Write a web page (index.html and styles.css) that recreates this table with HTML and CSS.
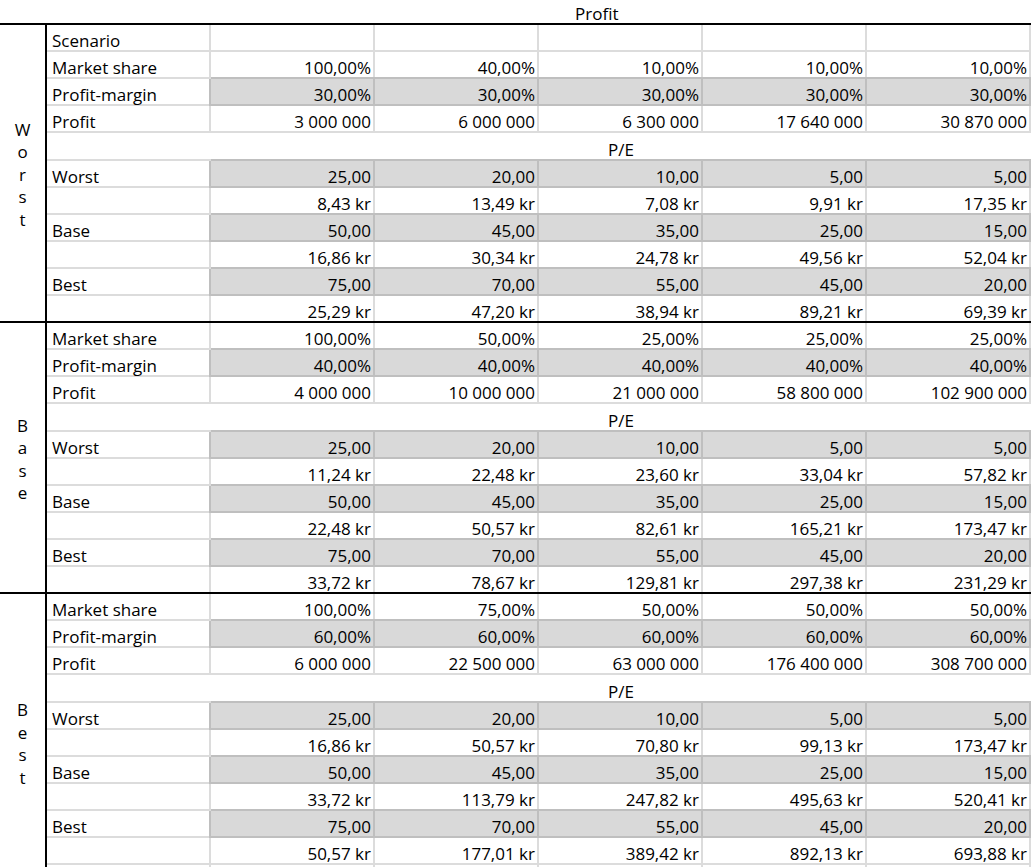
FILE: index.html
```html
<!DOCTYPE html>
<html lang="en">
<head>
<meta charset="utf-8">
<title>Profit scenarios</title>
<link rel="stylesheet" href="styles.css">
</head>
<body>
<div class="sheet">
  <div class="head">Profit</div>

  <div class="section">
    <div class="side">W<br>o<br>r<br>s<br>t</div>
    <div class="rows">
      <div class="row"><div class="cell label">Scenario</div><div class="cell"></div><div class="cell"></div><div class="cell"></div><div class="cell"></div><div class="cell"></div></div>
      <div class="row"><div class="cell label">Market share</div><div class="cell">100,00%</div><div class="cell">40,00%</div><div class="cell">10,00%</div><div class="cell">10,00%</div><div class="cell">10,00%</div></div>
      <div class="row"><div class="cell label">Profit-margin</div><div class="cell g">30,00%</div><div class="cell g">30,00%</div><div class="cell g">30,00%</div><div class="cell g">30,00%</div><div class="cell g">30,00%</div></div>
      <div class="row"><div class="cell label">Profit</div><div class="cell">3 000 000</div><div class="cell">6 000 000</div><div class="cell">6 300 000</div><div class="cell">17 640 000</div><div class="cell">30 870 000</div></div>
      <div class="row pe"><div class="cell label"></div><div class="cell merged">P/E</div></div>
      <div class="row"><div class="cell label">Worst</div><div class="cell g">25,00</div><div class="cell g">20,00</div><div class="cell g">10,00</div><div class="cell g">5,00</div><div class="cell g">5,00</div></div>
      <div class="row"><div class="cell label"></div><div class="cell">8,43 kr</div><div class="cell">13,49 kr</div><div class="cell">7,08 kr</div><div class="cell">9,91 kr</div><div class="cell">17,35 kr</div></div>
      <div class="row"><div class="cell label">Base</div><div class="cell g">50,00</div><div class="cell g">45,00</div><div class="cell g">35,00</div><div class="cell g">25,00</div><div class="cell g">15,00</div></div>
      <div class="row"><div class="cell label"></div><div class="cell">16,86 kr</div><div class="cell">30,34 kr</div><div class="cell">24,78 kr</div><div class="cell">49,56 kr</div><div class="cell">52,04 kr</div></div>
      <div class="row"><div class="cell label">Best</div><div class="cell g">75,00</div><div class="cell g">70,00</div><div class="cell g">55,00</div><div class="cell g">45,00</div><div class="cell g">20,00</div></div>
      <div class="row"><div class="cell label"></div><div class="cell">25,29 kr</div><div class="cell">47,20 kr</div><div class="cell">38,94 kr</div><div class="cell">89,21 kr</div><div class="cell">69,39 kr</div></div>
    </div>
  </div>

  <div class="section">
    <div class="side">B<br>a<br>s<br>e</div>
    <div class="rows">
      <div class="row"><div class="cell label">Market share</div><div class="cell">100,00%</div><div class="cell">50,00%</div><div class="cell">25,00%</div><div class="cell">25,00%</div><div class="cell">25,00%</div></div>
      <div class="row"><div class="cell label">Profit-margin</div><div class="cell g">40,00%</div><div class="cell g">40,00%</div><div class="cell g">40,00%</div><div class="cell g">40,00%</div><div class="cell g">40,00%</div></div>
      <div class="row"><div class="cell label">Profit</div><div class="cell">4 000 000</div><div class="cell">10 000 000</div><div class="cell">21 000 000</div><div class="cell">58 800 000</div><div class="cell">102 900 000</div></div>
      <div class="row pe"><div class="cell label"></div><div class="cell merged">P/E</div></div>
      <div class="row"><div class="cell label">Worst</div><div class="cell g">25,00</div><div class="cell g">20,00</div><div class="cell g">10,00</div><div class="cell g">5,00</div><div class="cell g">5,00</div></div>
      <div class="row"><div class="cell label"></div><div class="cell">11,24 kr</div><div class="cell">22,48 kr</div><div class="cell">23,60 kr</div><div class="cell">33,04 kr</div><div class="cell">57,82 kr</div></div>
      <div class="row"><div class="cell label">Base</div><div class="cell g">50,00</div><div class="cell g">45,00</div><div class="cell g">35,00</div><div class="cell g">25,00</div><div class="cell g">15,00</div></div>
      <div class="row"><div class="cell label"></div><div class="cell">22,48 kr</div><div class="cell">50,57 kr</div><div class="cell">82,61 kr</div><div class="cell">165,21 kr</div><div class="cell">173,47 kr</div></div>
      <div class="row"><div class="cell label">Best</div><div class="cell g">75,00</div><div class="cell g">70,00</div><div class="cell g">55,00</div><div class="cell g">45,00</div><div class="cell g">20,00</div></div>
      <div class="row"><div class="cell label"></div><div class="cell">33,72 kr</div><div class="cell">78,67 kr</div><div class="cell">129,81 kr</div><div class="cell">297,38 kr</div><div class="cell">231,29 kr</div></div>
    </div>
  </div>

  <div class="section last">
    <div class="side">B<br>e<br>s<br>t</div>
    <div class="rows">
      <div class="row"><div class="cell label">Market share</div><div class="cell">100,00%</div><div class="cell">75,00%</div><div class="cell">50,00%</div><div class="cell">50,00%</div><div class="cell">50,00%</div></div>
      <div class="row"><div class="cell label">Profit-margin</div><div class="cell g">60,00%</div><div class="cell g">60,00%</div><div class="cell g">60,00%</div><div class="cell g">60,00%</div><div class="cell g">60,00%</div></div>
      <div class="row"><div class="cell label">Profit</div><div class="cell">6 000 000</div><div class="cell">22 500 000</div><div class="cell">63 000 000</div><div class="cell">176 400 000</div><div class="cell">308 700 000</div></div>
      <div class="row pe"><div class="cell label"></div><div class="cell merged">P/E</div></div>
      <div class="row"><div class="cell label">Worst</div><div class="cell g">25,00</div><div class="cell g">20,00</div><div class="cell g">10,00</div><div class="cell g">5,00</div><div class="cell g">5,00</div></div>
      <div class="row"><div class="cell label"></div><div class="cell">16,86 kr</div><div class="cell">50,57 kr</div><div class="cell">70,80 kr</div><div class="cell">99,13 kr</div><div class="cell">173,47 kr</div></div>
      <div class="row"><div class="cell label">Base</div><div class="cell g">50,00</div><div class="cell g">45,00</div><div class="cell g">35,00</div><div class="cell g">25,00</div><div class="cell g">15,00</div></div>
      <div class="row"><div class="cell label"></div><div class="cell">33,72 kr</div><div class="cell">113,79 kr</div><div class="cell">247,82 kr</div><div class="cell">495,63 kr</div><div class="cell">520,41 kr</div></div>
      <div class="row"><div class="cell label">Best</div><div class="cell g">75,00</div><div class="cell g">70,00</div><div class="cell g">55,00</div><div class="cell g">45,00</div><div class="cell g">20,00</div></div>
      <div class="row"><div class="cell label"></div><div class="cell">50,57 kr</div><div class="cell">177,01 kr</div><div class="cell">389,42 kr</div><div class="cell">892,13 kr</div><div class="cell">693,88 kr</div></div>
      <div class="row"><div class="cell label"></div><div class="cell"></div><div class="cell"></div><div class="cell"></div><div class="cell"></div><div class="cell"></div></div>
    </div>
  </div>
</div>
</body>
</html>
```

FILE: styles.css
```css
html, body {
  margin: 0;
  padding: 0;
  background: #ffffff;
}

body {
  font-family: "Open Sans", "Noto Sans", sans-serif;
  font-size: 17px;
  color: #000000;
  width: 1031px;
  height: 867px;
  overflow: hidden;
}

.sheet {
  width: 1031px;
}

.head {
  box-sizing: border-box;
  height: 25px;
  border-bottom: 2px solid #000000;
  display: flex;
  align-items: flex-end;
  padding-left: 575px;
  padding-bottom: 1px;
  line-height: 17px;
}

.section {
  display: flex;
  border-bottom: 2px solid #000000;
}

.section.last {
  border-bottom: none;
}

.side {
  box-sizing: border-box;
  width: 47px;
  flex: none;
  border-right: 2px solid #000000;
  display: flex;
  align-items: center;
  justify-content: center;
  text-align: center;
  line-height: 22.5px;
  padding-top: 4px;
}

.rows {
  flex: 1;
}

.row {
  display: grid;
  grid-template-columns: repeat(6, 164px);
  height: 27px;
}

.row:last-child {
  height: 25px;
}

.row:last-child .cell {
  border-bottom: none;
}

.row.pe {
  height: 28px;
  grid-template-columns: 164px 820px;
}

.cell {
  box-sizing: border-box;
  border-right: 2px solid #dcdcdc;
  border-bottom: 2px solid #dcdcdc;
  display: flex;
  align-items: flex-end;
  justify-content: flex-end;
  padding: 0 2px 1px 0;
  line-height: 17px;
  white-space: nowrap;
}

.cell.label {
  justify-content: flex-start;
  padding-left: 5px;
}

.row.pe .cell {
  border-right: none;
}

.cell.merged {
  justify-content: center;
  padding-right: 0;
}

.cell.g {
  background: #d9d9d9;
  border-color: #bfbfbf;
  box-shadow: -2px 0 0 #bfbfbf, 0 -2px 0 #bfbfbf;
}
```
